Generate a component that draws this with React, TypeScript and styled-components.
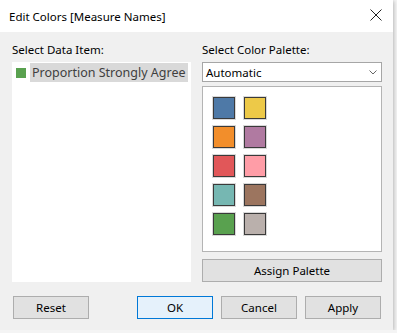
import styled, { createGlobalStyle } from "styled-components";

const GlobalStyle = createGlobalStyle`
  html, body {
    margin: 0;
    padding: 0;
    background: #f4f4f4;
  }
  body {
    font-family: "Noto Sans", "Open Sans", sans-serif;
    font-size: 11.5px;
    color: #000;
  }
`;

const swatches = [
  "#4e79a7",
  "#edc948",
  "#f28e2b",
  "#b07aa1",
  "#e15759",
  "#ff9da7",
  "#76b7b2",
  "#9c755f",
  "#59a14f",
  "#bab0ac",
];

function App() {
  return (
    <>
      <GlobalStyle />
      <Dialog>
        <TitleBar>
          <Title>Edit Colors [Measure Names]</Title>
          <CloseBtn aria-label="Close">
            <svg width="12" height="12" viewBox="0 0 12 12">
              <path d="M0.5 0.5 L11.5 11.5 M11.5 0.5 L0.5 11.5" stroke="#222" strokeWidth="1" />
            </svg>
          </CloseBtn>
        </TitleBar>

        <Body>
          <Column>
            <Label>Select Data Item:</Label>
            <ListBox>
              <ListItem>
                <ItemSwatch color="#59a14f" />
                <ItemText>Proportion Strongly Agree</ItemText>
              </ListItem>
            </ListBox>
          </Column>

          <Column>
            <Label>Select Color Palette:</Label>
            <Select>
              <span>Automatic</span>
              <svg width="8" height="5" viewBox="0 0 8 5">
                <path d="M0.5 0.5 L4 4 L7.5 0.5" stroke="#666" fill="none" strokeWidth="1" />
              </svg>
            </Select>
            <PaletteBox>
              <SwatchGrid>
                {swatches.map((c) => (
                  <Swatch key={c} color={c} />
                ))}
              </SwatchGrid>
            </PaletteBox>
            <Button $wide>Assign Palette</Button>
          </Column>
        </Body>

        <Footer>
          <Button>Reset</Button>
          <ButtonGroup>
            <Button $primary>OK</Button>
            <Button>Cancel</Button>
            <Button>Apply</Button>
          </ButtonGroup>
        </Footer>
      </Dialog>
    </>
  );
}

const Dialog = styled.div`
  width: 393px;
  height: 330px;
  background: #f0f0f0;
  box-shadow: 1px 1px 4px rgba(0, 0, 0, 0.25);
  display: flex;
  flex-direction: column;
`;

const TitleBar = styled.div`
  height: 32px;
  background: #fff;
  display: flex;
  align-items: center;
  justify-content: space-between;
  padding: 0 11px 0 9px;
  box-sizing: border-box;
`;

const Title = styled.span`
  font-size: 11.5px;
  color: #000;
`;

const CloseBtn = styled.div`
  width: 12px;
  height: 12px;
  display: flex;
  margin-top: -2px;
`;

const Body = styled.div`
  display: grid;
  grid-template-columns: 179px 180px;
  column-gap: 11px;
  padding: 10px 0 0 12px;
`;

const Column = styled.div`
  display: flex;
  flex-direction: column;
`;

const Label = styled.div`
  height: 16px;
  line-height: 16px;
  margin-bottom: 4px;
  color: #000;
  white-space: nowrap;
`;

const ListBox = styled.div`
  height: 220px;
  background: #fff;
  padding: 1px 5px 0 4px;
  box-sizing: border-box;
`;

const ListItem = styled.div`
  display: flex;
  align-items: center;
  gap: 4px;
  height: 19px;
`;

const ItemSwatch = styled.div<{ color: string }>`
  width: 10px;
  height: 10px;
  flex: none;
  background: ${(p) => p.color};
`;

const ItemText = styled.span`
  flex: 1;
  background: #d9d9d9;
  color: #404040;
  font-size: 12.5px;
  line-height: 19px;
  padding: 0 2px;
  white-space: nowrap;
`;

const Select = styled.div`
  height: 20px;
  box-sizing: border-box;
  border: 1px solid #a6a6a6;
  background: #fff;
  display: flex;
  align-items: center;
  justify-content: space-between;
  padding: 0 4px 0 3px;
  margin-bottom: 4px;
`;

const PaletteBox = styled.div`
  height: 166px;
  box-sizing: border-box;
  border: 1px solid #b4b4b4;
  background: #fff;
  padding: 10px 0 0 10px;
  margin-bottom: 7px;
`;

const SwatchGrid = styled.div`
  display: grid;
  grid-template-columns: repeat(2, 22px);
  grid-auto-rows: 22px;
  column-gap: 9px;
  row-gap: 7px;
`;

const Swatch = styled.div<{ color: string }>`
  background: ${(p) => p.color};
  border: 1px solid #3a3a3a;
  box-sizing: border-box;
  box-shadow: 0 0 0 1px rgba(180, 180, 180, 0.5);
`;

const Footer = styled.div`
  display: flex;
  justify-content: space-between;
  padding: 14px 12px 0 13px;
`;

const ButtonGroup = styled.div`
  display: flex;
  gap: 8px;
`;

const Button = styled.div<{ $primary?: boolean; $wide?: boolean }>`
  width: ${(p) => (p.$wide ? "180px" : "76px")};
  height: 23px;
  box-sizing: border-box;
  display: flex;
  align-items: center;
  justify-content: center;
  background: ${(p) => (p.$primary ? "#e5f1fb" : "#e1e1e1")};
  border: 1px solid ${(p) => (p.$primary ? "#0078d7" : "#adadad")};
  color: #000;
`;

export default App;
